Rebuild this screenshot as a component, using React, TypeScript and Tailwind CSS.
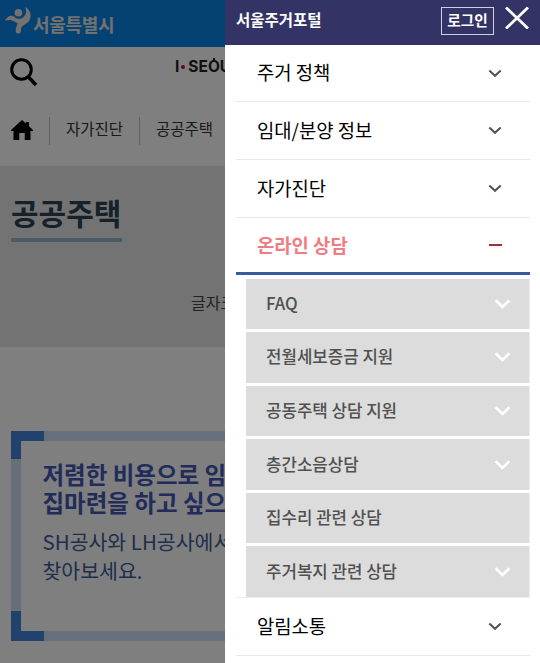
import React, { useState } from 'react';

interface SubItem {
  label: string;
  expandable: boolean;
}

interface MenuItem {
  label: string;
  height: string;
  children?: SubItem[];
}

interface ChevronProps {
  className?: string;
}

const menuItems: MenuItem[] = [
  { label: '주거 정책', height: 'h-[57px]' },
  { label: '임대/분양 정보', height: 'h-[58px]' },
  { label: '자가진단', height: 'h-[58px]' },
  {
    label: '온라인 상담',
    height: 'h-[57px]',
    children: [
      { label: 'FAQ', expandable: true },
      { label: '전월세보증금 지원', expandable: true },
      { label: '공동주택 상담 지원', expandable: true },
      { label: '층간소음상담', expandable: true },
      { label: '집수리 관련 상담', expandable: false },
      { label: '주거복지 관련 상담', expandable: true }
    ]
  },
  { label: '알림소통', height: 'h-[58px]' }
];

const Chevron: React.FC<ChevronProps> = ({ className = '' }) => (
  <svg className={className} viewBox="0 0 16 9" fill="none" stroke="currentColor" strokeWidth="2.4">
    <path d="M1.5 1 L8 7.2 L14.5 1" />
  </svg>
);

const SeoulMark: React.FC = () => (
  <svg className="h-[28px] w-[27px]" viewBox="0 0 27 28" fill="#e8e4e0">
    <circle cx="13.4" cy="5.7" r="3.8" />
    <path d="M0 13.8 C2.5 8.2 7 7.6 10 10.2 C12.3 12.2 15.4 12.4 18 10.4 C21.4 7.6 22 4 20 0 C25.2 2.6 27 8 24.6 13 C22.4 17.2 17.8 17.6 16.4 20.6 C15.6 22.6 16.2 24 15.6 25.2 C14.8 27.2 11.2 27 10.7 24.4 C10.1 21.4 12.4 18.6 12.6 16.2 C10.6 15.6 8.8 13.8 6.4 13.2 C4.2 12.7 2 13.2 0 13.8 Z" />
  </svg>
);

const PageContent: React.FC = () => (
  <div className="w-[540px] h-[663px] bg-white overflow-hidden">
    <header className="h-[47px] bg-[#0884e8] flex items-start pl-[5px] pt-[7px]">
      <SeoulMark />
      <span className="ml-[1px] mt-[7px] text-[18px] leading-[20px] font-bold tracking-[-0.3px] text-[#e8e4e0]">서울특별시</span>
    </header>

    <div className="h-[54px] flex items-start">
      <svg className="ml-[10px] mt-[10px] w-[28px] h-[30px]" viewBox="0 0 28 30" fill="none" stroke="#000" strokeWidth="3">
        <circle cx="11.5" cy="12.5" r="9.8" />
        <path d="M18.5 20 L26 28" strokeWidth="3.5" />
      </svg>
      <div className="ml-[137px] mt-[11px] flex items-center font-[Inter] text-[15.5px] leading-[18px] font-bold text-[#222]">
        <span>I</span>
        <span className="ml-[2px] mr-[3px] w-[4px] h-[4px] rounded-full bg-[#e00030]" />
        <span className="relative">
          SEOU
          <span className="absolute left-[25px] top-0 w-[2px] h-[4px] bg-[#222]" />
        </span>
      </div>
    </div>

    <nav className="h-[65px] flex items-start pt-[15px] text-[15.5px] leading-[24px] text-[#333]">
      <svg className="ml-[11px] mt-[4px] w-[22px] h-[20px]" viewBox="0 0 22 20" fill="#000">
        <path d="M11 0 L15 3.6 V2 H18 V6.3 L22 10 V11 H19.5 V20 H13.7 V13 H8.3 V20 H2.5 V11 H0 V10 Z" />
      </svg>
      <span className="ml-[16px] mt-px w-px h-[28px] bg-[#c4c4c4]" />
      <span className="ml-[16px]">자가진단</span>
      <span className="ml-[16px] mt-px w-px h-[28px] bg-[#c4c4c4]" />
      <span className="ml-[16px]">공공주택</span>
    </nav>

    <section className="h-[181px] bg-[#e6e6e6] pl-[11px] pt-[27px]">
      <h1 className="w-[111px] h-[49px] border-b-[4px] border-[#8fb8d0] text-[30px] leading-[38px] font-bold text-[#2c4254] whitespace-nowrap">
        공공주택
      </h1>
      <p className="ml-[180px] mt-[48px] text-[16px] leading-[24px] text-[#3c4650]">글자크</p>
    </section>

    <section className="relative ml-[10.5px] mt-[84px] h-[210px] w-[518px] border-[10px] border-[#cfdffb] pl-[22px] pt-[19px]">
      <span className="absolute -left-[10px] -top-[10px] w-[33px] h-[28px] border-l-[10px] border-t-[10px] border-[#4484dc]" />
      <span className="absolute -left-[10px] -bottom-[10px] w-[33px] h-[30px] border-l-[10px] border-b-[10px] border-[#4484dc]" />
      <h2 className="text-[23.5px] leading-[28px] font-bold text-[#4458b4] whitespace-nowrap">
        저렴한 비용으로 임
        <br />
        집마련을 하고 싶으
      </h2>
      <p className="mt-[11px] text-[20.5px] leading-[29px] font-normal text-[#3c5c98] whitespace-nowrap">
        SH공사와 LH공사에서
        <br />
        찾아보세요.
      </p>
    </section>
  </div>
);

const App: React.FC = () => {
  const [openItem, setOpenItem] = useState('온라인 상담');

  return (
    <div className="relative w-[540px] h-[663px] overflow-hidden font-['Noto_Sans_CJK_KR',sans-serif]">
      <PageContent />
      <div className="absolute inset-0 bg-black/50" />

      <aside className="absolute right-0 top-0 w-[315px] h-[663px] bg-white overflow-hidden">
        <div className="h-[45px] bg-[#343366] flex items-start text-white">
          <strong className="ml-[11px] mt-[7px] w-[205px] text-[15.5px] leading-[24px] font-bold">서울주거포털</strong>
          <button className="mt-[7px] w-[53px] h-[28px] border border-[#d0d0e0] text-[14.7px] leading-[22px] pb-[2px] font-bold">
            로그인
          </button>
          <svg className="ml-[11px] mt-[7px] w-[24px] h-[22px]" viewBox="0 0 24 22" fill="none" stroke="#fff" strokeWidth="2.8">
            <path d="M1 0.5 L23 21.5 M23 0.5 L1 21.5" />
          </svg>
        </div>

        <ul className="mx-[11px] w-[294px]">
          {menuItems.map((item) => {
            const isOpen = item.label === openItem;
            return (
              <li key={item.label}>
                <button
                  onClick={() => setOpenItem(isOpen ? '' : item.label)}
                  className={`w-full ${item.height} flex items-center justify-between pl-[21px] pr-[28px] text-[18.8px] ${
                    isOpen
                      ? 'border-b-[3px] border-[#3a5aa0] font-bold text-[#f07c82]'
                      : 'border-b border-[#e8e8e8] text-black'
                  }`}
                >
                  <span className={isOpen ? 'leading-[28px]' : 'leading-[28px] pb-[2px]'}>{item.label}</span>
                  {isOpen ? (
                    <span className="w-[13px] h-[2px] bg-[#a03038]" />
                  ) : (
                    <Chevron className="w-[14px] h-[9px] text-[#555]" />
                  )}
                </button>

                {isOpen && item.children && (
                  <ul className="pl-[10px] pt-[3.5px] border-b border-[#eee] flex flex-col gap-[3px]">
                    {item.children.map((child) => (
                      <li
                        key={child.label}
                        className="h-[50.6px] bg-[#dcdcdc] border-r border-[#eee] flex items-center justify-between pl-[20px] pr-[18px] text-[16.8px] leading-[24px] font-medium text-[#505050]"
                      >
                        <span className="pb-[2px]">{child.label}</span>
                        {child.expandable && <Chevron className="w-[17px] h-[10px] text-white" />}
                      </li>
                    ))}
                  </ul>
                )}
              </li>
            );
          })}
        </ul>
      </aside>
    </div>
  );
};

export default App;
